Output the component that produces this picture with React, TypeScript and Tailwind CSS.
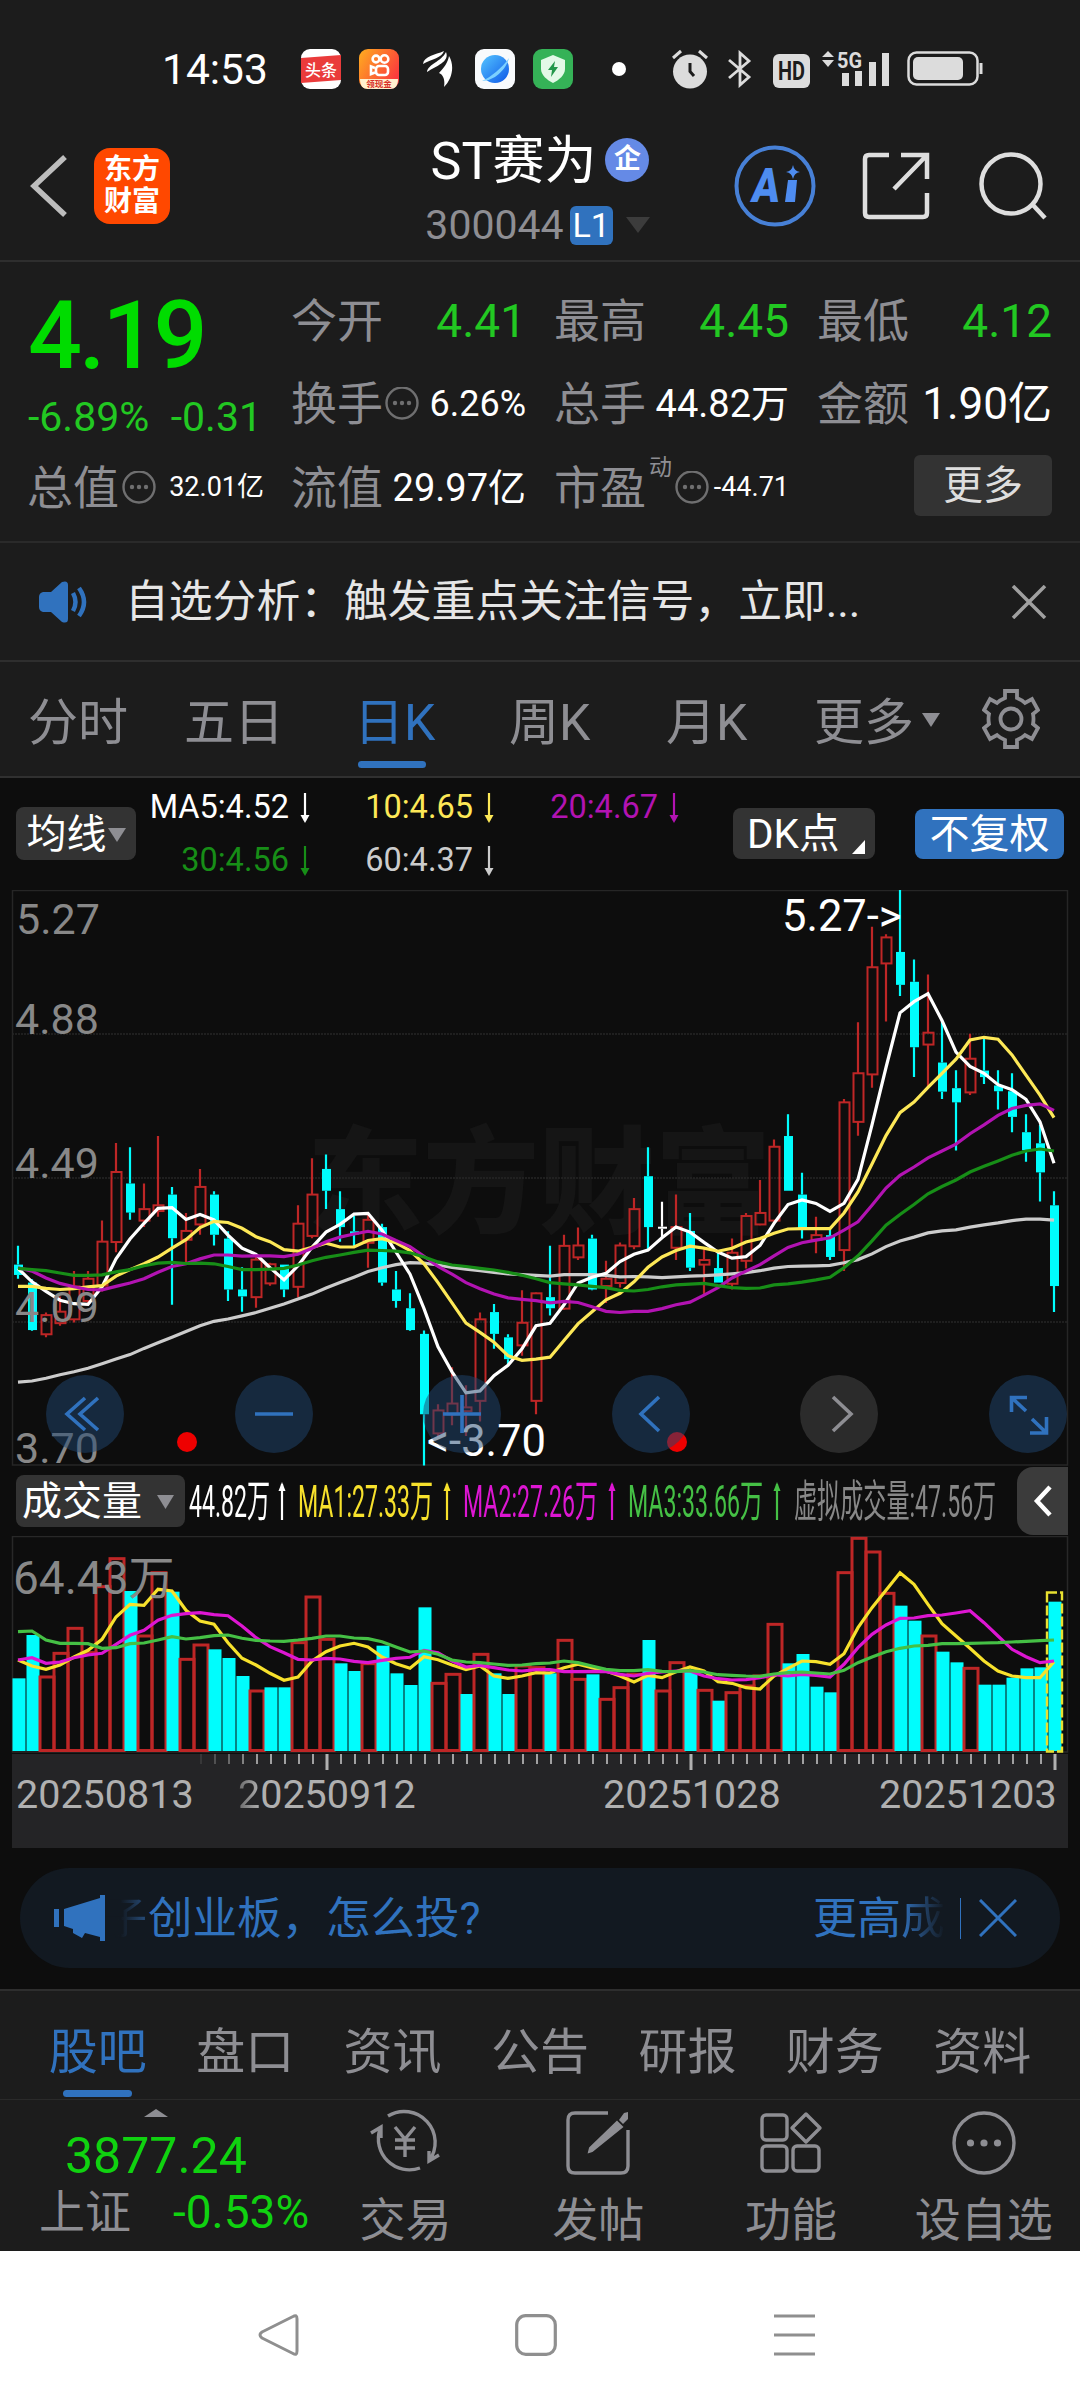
import React from "react";
import clsx from "clsx";

type Kind = "up" | "down" | "flat";
type Candle = [number, number, number, number, Kind];

const STEP = 14;
const FIRST_X = 18;
const COLORS: Record<Kind, string> = { up: "#be2626", down: "#00fdfd", flat: "#ffffff" };

// high, body top, body bottom, low
const candles: Candle[] = [
  [956, 1005, 1032, 1042, "down"], [1043, 1052, 1176, 1178, "down"], [1130, 1137, 1187, 1195, "up"],
  [1088, 1128, 1158, 1165, "up"], [1022, 1062, 1148, 1156, "up"], [1022, 1042, 1100, 1110, "up"],
  [890, 945, 1060, 1075, "up"], [687, 763, 946, 973, "up"], [698, 793, 869, 888, "down"],
  [793, 860, 890, 907, "up"], [669, 850, 865, 880, "up"], [802, 822, 936, 1110, "down"],
  [870, 917, 940, 1000, "up"], [755, 802, 900, 927, "up"], [813, 822, 927, 955, "down"],
  [918, 937, 1070, 1100, "down"], [1012, 1070, 1088, 1128, "down"], [985, 992, 1090, 1118, "up"],
  [1000, 1004, 1054, 1060, "up"], [1005, 1005, 1070, 1090, "down"], [850, 898, 1063, 1090, "up"],
  [727, 822, 930, 936, "up"], [717, 755, 812, 860, "down"], [813, 860, 907, 945, "down"],
  [878, 918, 926, 958, "down"], [875, 888, 948, 1013, "up"], [898, 907, 1052, 1060, "down"],
  [1022, 1070, 1100, 1118, "down"], [1080, 1119, 1176, 1178, "down"], [1177, 1186, 1396, 1530, "down"],
  [1370, 1386, 1446, 1460, "up"], [1273, 1368, 1396, 1425, "up"], [1320, 1378, 1388, 1453, "up"],
  [1130, 1148, 1361, 1415, "up"], [1108, 1129, 1186, 1225, "down"], [1187, 1195, 1252, 1265, "down"],
  [1072, 1157, 1216, 1243, "up"], [1078, 1080, 1361, 1396, "up"], [956, 1090, 1119, 1138, "down"],
  [927, 956, 1120, 1123, "up"], [908, 955, 986, 993, "up"], [927, 937, 1070, 1072, "down"],
  [995, 1042, 1061, 1105, "up"], [947, 955, 1053, 1065, "up"], [831, 860, 957, 965, "up"],
  [698, 774, 907, 965, "down"], [841, 906, 911, 937, "flat"], [822, 907, 961, 993, "up"],
  [870, 917, 1013, 1022, "down"], [965, 993, 1005, 1085, "up"], [975, 1014, 1052, 1052, "down"],
  [937, 974, 1055, 1070, "up"], [870, 878, 995, 1015, "up"], [784, 870, 900, 902, "up"],
  [678, 697, 890, 893, "up"], [612, 669, 812, 812, "down"], [765, 822, 912, 937, "down"],
  [880, 928, 940, 975, "up"], [912, 928, 985, 993, "down"], [572, 581, 967, 1022, "up"],
  [372, 505, 632, 668, "up"], [122, 228, 508, 543, "up"], [142, 150, 218, 370, "up"],
  [26, 188, 274, 303, "down"], [208, 266, 437, 515, "down"], [247, 399, 430, 540, "up"],
  [370, 477, 553, 572, "down"], [497, 544, 581, 707, "down"], [402, 467, 555, 562, "up"],
  [415, 498, 515, 533, "down"], [497, 537, 552, 600, "down"], [505, 552, 619, 659, "down"],
  [612, 659, 706, 736, "down"], [640, 688, 764, 840, "down"], [813, 850, 1061, 1129, "down"],
];

const priceLines = [
  {
    color: "#cccccc",
    values: [1312, 1309, 1302, 1293, 1285, 1276, 1264, 1252, 1240, 1224, 1209, 1195, 1180, 1165, 1153, 1147, 1139, 1130, 1119, 1108, 1095, 1082, 1066, 1052, 1038, 1023, 1013, 1005, 1000, 1001, 1006, 1012, 1017, 1021, 1025, 1029, 1031, 1033, 1035, 1031, 1031, 1031, 1033, 1037, 1036, 1037, 1039, 1037, 1035, 1034, 1032, 1029, 1026, 1021, 1014, 1010, 1009, 1008, 1007, 1000, 992, 977, 958, 943, 933, 922, 917, 914, 907, 901, 896, 890, 886, 886, 889],
  },
  {
    color: "#ffffff",
    values: [1015, 1050, 1075, 1098, 1107, 1109, 1063, 990, 938, 897, 858, 856, 887, 874, 888, 928, 962, 978, 1013, 1045, 1008, 960, 920, 900, 873, 871, 915, 972, 1030, 1120, 1220, 1285, 1340, 1335, 1295, 1268, 1225, 1165, 1158, 1110, 1053, 1038, 1028, 997, 978, 967, 935, 907, 920, 947, 972, 988, 984, 955, 897, 848, 836, 845, 866, 845, 782, 640, 490, 347, 318, 297, 367, 450, 487, 505, 535, 548, 573, 632, 740],
  },
  {
    color: "#fde857",
    values: [1062, 1062, 1067, 1070, 1068, 1063, 1060, 1035, 1018, 1003, 985, 962, 940, 908, 892, 895, 910, 932, 945, 966, 970, 960, 949, 959, 959, 942, 937, 948, 968, 1003, 1052, 1105, 1158, 1182, 1208, 1243, 1255, 1252, 1247, 1203, 1160, 1128, 1097, 1080, 1050, 1012, 985, 968, 957, 962, 970, 962, 946, 937, 923, 912, 911, 911, 911, 870, 815, 742, 668, 608, 580, 542, 505, 468, 418, 411, 416, 457, 510, 562, 621],
  },
  {
    color: "#b213b2",
    values: [1013, 1022, 1040, 1054, 1063, 1070, 1071, 1062, 1053, 1042, 1025, 1010, 1003, 990, 980, 980, 983, 982, 982, 984, 978, 962, 945, 933, 925, 918, 925, 942, 958, 983, 1010, 1030, 1052, 1068, 1082, 1092, 1096, 1099, 1105, 1101, 1104, 1115, 1127, 1130, 1127, 1127, 1120, 1110, 1103, 1085, 1065, 1040, 1022, 1005, 982, 960, 948, 941, 935, 915, 893, 850, 805, 772, 750, 726, 708, 690, 663, 640, 615, 597, 589, 585, 602],
  },
  {
    color: "#178e17",
    values: [1015, 1018, 1021, 1027, 1033, 1033, 1032, 1024, 1018, 1008, 1001, 999, 1002, 1001, 1003, 1010, 1018, 1018, 1017, 1015, 1006, 995, 986, 980, 973, 967, 968, 970, 974, 985, 998, 1006, 1010, 1015, 1019, 1025, 1033, 1042, 1052, 1055, 1058, 1062, 1065, 1072, 1074, 1070, 1063, 1058, 1056, 1054, 1060, 1065, 1067, 1066, 1058, 1055, 1051, 1045, 1038, 1013, 982, 943, 902, 874, 848, 820, 801, 784, 763, 748, 734, 719, 708, 703, 708],
  },
];

const volumeTops = [
  655, 525, 648, 577, 502, 575, 377, 293, 393, 525, 335, 395, 595, 552, 568, 594, 648, 690, 682, 682, 545, 408, 535, 610, 633,
  608, 557, 640, 675, 442, 667, 640, 702, 580, 640, 702, 615, 620, 640, 538, 655, 643, 715, 680, 640, 540, 690, 605, 633, 688,
  722, 695, 675, 645, 490, 610, 582, 680, 697, 335, 232, 273, 397, 437, 482, 525, 575, 607, 622, 674, 674, 653, 625, 622, 425,
];

// days whose volume bar is filled
const volumeDown = [
  0, 1, 8, 11, 14, 15, 16, 18, 19, 23, 24, 26, 27, 28, 29, 32, 34, 35, 38, 41, 45, 48, 50, 55, 56, 57, 58, 63, 64, 66, 67, 69, 70,
  71, 72, 73, 74,
];

const volumeLines = [
  {
    color: "#f7e12c",
    values: [597, 615, 625, 612, 588, 568, 535, 468, 430, 433, 385, 390, 448, 480, 490, 545, 592, 612, 637, 658, 648, 600, 572, 555, 547, 558, 588, 608, 622, 587, 596, 612, 626, 615, 645, 652, 645, 635, 636, 620, 610, 620, 630, 645, 663, 643, 650, 632, 618, 630, 662, 667, 680, 684, 645, 622, 600, 602, 610, 578, 500, 440, 388, 335, 370, 430, 488, 525, 562, 600, 630, 645, 650, 650, 602],
  },
  {
    color: "#dd16d2",
    values: [597, 590, 607, 603, 590, 582, 577, 550, 523, 508, 478, 463, 458, 455, 461, 464, 495, 530, 557, 575, 595, 597, 592, 594, 601, 605, 598, 592, 589, 568, 575, 600, 618, 613, 620, 627, 630, 626, 626, 632, 632, 631, 632, 640, 645, 637, 633, 630, 630, 645, 653, 657, 656, 650, 641, 645, 640, 643, 648, 610, 560, 520, 492, 472, 471, 464, 462, 456, 449, 485, 525, 565, 587, 605, 600],
  },
  {
    color: "#45c045",
    values: [512, 510, 537, 547, 547, 548, 562, 560, 548, 546, 537, 527, 534, 530, 524, 522, 532, 538, 540, 541, 537, 532, 525, 525, 531, 533, 542, 558, 573, 570, 580, 597, 603, 605, 609, 613, 612, 608, 606, 600, 605, 615, 625, 629, 629, 626, 631, 632, 629, 633, 641, 643, 645, 646, 639, 635, 633, 636, 639, 628, 605, 588, 572, 562, 555, 553, 548, 548, 547, 546, 545, 543, 541, 539, 537],
  },
];

const xAt = (i: number) => FIRST_X + i * STEP;
const priceY = (v: number) => v / 2.613;
const volumeY = (v: number) => (v - 228) / 3 + 1;

function toPoints(values: number[], scale: (v: number) => number) {
  return values.map((v, i) => `${xAt(i)},${scale(v).toFixed(1)}`).join(" ");
}

function Triangle({ className, up }: { className: string; up?: boolean }) {
  return (
    <svg viewBox="0 0 18 14" preserveAspectRatio="none" className={className} fill="currentColor">
      <path d={up ? "M0 14L9 0L18 14Z" : "M0 0H18L9 14Z"} />
    </svg>
  );
}

function Dots({ className }: { className?: string }) {
  return (
    <svg viewBox="0 0 34 34" className={clsx("w-[34px] h-[34px] shrink-0 text-[#6f6f70]", className)} fill="none" stroke="currentColor" strokeWidth="2.4">
      <circle cx="17" cy="16" r="15.5" />
      <g fill="currentColor" stroke="none">
        <circle cx="10" cy="16" r="2.2" />
        <circle cx="17" cy="16" r="2.2" />
        <circle cx="24" cy="16" r="2.2" />
      </g>
    </svg>
  );
}

function StatusBar() {
  return (
    <div className="h-[126px] pt-3 pl-[162px] flex items-center text-white">
      <span className="w-[139px] pt-0.5 text-[42.500px] leading-none">14:53</span>
      <svg viewBox="0 0 40 40" className="w-10 h-10 mr-[18px]">
        <rect width="40" height="40" rx="9" fill="#fff" />
        <path d="M0 9L40 6V31L0 34Z" fill="#ea3b3b" />
        <text x="20" y="26.5" textAnchor="middle" fontSize="16" fontWeight="500" fill="#fff">头条</text>
      </svg>
      <svg viewBox="0 0 40 40" className="w-10 h-10 mr-6">
        <defs>
          <linearGradient id="ks" x1="0" y1="0" x2="1" y2="0.6">
            <stop offset="0" stopColor="#ffae1f" />
            <stop offset="1" stopColor="#fb3a3d" />
          </linearGradient>
        </defs>
        <rect width="40" height="40" rx="9" fill="url(#ks)" />
        <g fill="none" stroke="#fff" strokeWidth="2.6">
          <circle cx="17" cy="10" r="3.4" />
          <circle cx="25.5" cy="10" r="3.8" />
          <rect x="17" y="17" width="12" height="9" rx="3" />
          <path d="M16 19L12 17.500V25L16 23.500" />
        </g>
        <path d="M1 30H39C39 37 36 40 31 40H9C4 40 1 37 1 30Z" fill="#fff0cf" />
        <text x="20" y="38" textAnchor="middle" fontSize="8.500" fontWeight="700" fill="#d8322b">领现金</text>
      </svg>
      <svg viewBox="0 0 30 36" className="w-[30px] h-9 mr-[22px]" fill="#fff">
        <path d="M0 13C1 5 12 4 21 0C19 7 9 8 0 13Z" />
        <path d="M4 21C5 13 18 11 23 1C27 11 13 15 4 21Z" />
        <path d="M16 22C21 17 25 11 26 5C32 15 29 28 21 36C22 30 21 24 16 22Z" />
      </svg>
      <svg viewBox="0 0 40 40" className="w-10 h-10 mr-[18px]">
        <defs>
          <linearGradient id="globe" x1="0" y1="0" x2="1" y2="1">
            <stop offset="0" stopColor="#55c5ff" />
            <stop offset="1" stopColor="#0d57e8" />
          </linearGradient>
        </defs>
        <rect width="40" height="40" rx="9" fill="#f8fafc" />
        <circle cx="20" cy="20" r="14" fill="url(#globe)" />
        <path d="M7 32C16 28 27 19 34 9C31 21 19 32 7 32Z" fill="#7cd0ff" />
      </svg>
      <svg viewBox="0 0 40 40" className="w-10 h-10 mr-[39px]">
        <rect width="40" height="40" rx="9" fill="#35b257" />
        <path d="M20 6L32 11V20C32 26 26 31 20 34C14 31 8 26 8 20V11Z" fill="#e3f9e7" />
        <path d="M22 12L15 21H19L18 28L25 18H21Z" fill="#23974a" />
      </svg>
      <span className="w-3.5 h-3.5 rounded-full bg-white mr-[46px]" />
      <svg viewBox="0 0 36 40" className="w-9 h-10 mr-5" fill="#dcdcdc">
        <circle cx="18" cy="22.500" r="17" />
        <path d="M18 14V22.500L22 27" fill="none" stroke="#1c1c1c" strokeWidth="3" />
        <path d="M1 9L9 2M35 9L27 2" stroke="#dcdcdc" strokeWidth="3" />
      </svg>
      <svg viewBox="0 0 24 38" className="w-6 h-[38px] mr-[21px]" fill="none" stroke="#dcdcdc" strokeWidth="2.800">
        <path d="M1 10L21 27L12 35V3L21 11L1 28" />
      </svg>
      <svg viewBox="0 0 37 34" className="w-[37px] h-[34px] mr-3 mt-1">
        <rect width="37" height="34" rx="6" fill="#dcdcdc" />
        <text x="5" y="26" textLength="27" lengthAdjust="spacingAndGlyphs" fontSize="25" fontWeight="700" fill="#1c1c1c">HD</text>
      </svg>
      <svg viewBox="0 0 68 38" className="w-[68px] h-[38px] mr-[17px]" fill="#dcdcdc">
        <path d="M0 7L6 1L12 7ZM0 10H12L6 17Z" />
        <text x="15" y="17.500" textLength="25" lengthAdjust="spacingAndGlyphs" fontSize="22" fontWeight="700">5G</text>
        <rect x="20" y="23" width="7" height="13" />
        <rect x="33" y="21" width="7" height="15" />
        <rect x="47" y="12" width="7" height="24" />
        <rect x="60" y="3" width="7" height="33" />
      </svg>
      <svg viewBox="0 0 76 36" className="w-[76px] h-9">
        <rect x="1.500" y="1.500" width="69" height="32" rx="8" fill="none" stroke="#dcdcdc" strokeWidth="2.500" />
        <rect x="6" y="6" width="50" height="23" rx="5" fill="#dcdcdc" />
        <path d="M74 12V23" stroke="#dcdcdc" strokeWidth="3" />
      </svg>
    </div>
  );
}

function Header() {
  return (
    <div className="h-[136px] flex border-b-2 border-[#2e2e2e]">
      <div className="w-[400px] pl-[30px] pb-[15px] flex items-center gap-[27px]">
        <svg viewBox="0 0 37 62" className="w-[37px] h-[62px]" fill="none" stroke="#bdbdbd" strokeWidth="5.500">
          <path d="M35 2L4 31L35 60" />
        </svg>
        <div className="w-[76px] h-[76px] rounded-2xl bg-[#ff4800] text-white font-bold text-[28px] leading-[32px] flex flex-col items-center justify-center">
          <span>东方</span>
          <span>财富</span>
        </div>
      </div>
      <div className="w-[280px] flex flex-col items-center">
        <div className="h-[69px] flex items-center gap-[9px]">
          <span className="pt-0.5 text-[52px] leading-none text-white whitespace-nowrap">ST赛为</span>
          <span className="w-11 h-11 -mt-0.5 rounded-full bg-[#658ae6] text-white text-[27px] font-bold leading-none flex items-center justify-center">企</span>
        </div>
        <div className="h-16 -mt-0.5 mr-[5px] flex items-center">
          <span className="text-[41px] leading-none text-[#8e8e93]">300044</span>
          <span className="ml-[6px] w-[43px] h-[39px] rounded-md bg-[#3072be] text-white text-[34px] leading-none flex items-center justify-center">L1</span>
          <Triangle className="ml-[13px] w-6 h-4 text-[#3c3c3c]" />
        </div>
      </div>
      <div className="flex-1 pl-[54px] pb-[15px] flex items-center">
        <svg viewBox="0 0 82 82" className="w-[82px] h-[82px] mr-[46px]">
          <circle cx="41" cy="41" r="38.500" fill="none" stroke="#4780d6" strokeWidth="4" />
          <text x="24" y="57" fontSize="48" fontWeight="900" fill="#4e8cf0" transform="skewX(-8)" textLength="28" lengthAdjust="spacingAndGlyphs">A</text>
          <path d="M54 35H63L61 57H51Z" fill="#4e8cf0" />
          <path d="M59 20Q60 26 66 27Q60 28 59 34Q58 28 52 27Q58 26 59 20Z" fill="#4e8cf0" />
        </svg>
        <svg viewBox="0 0 68 68" className="w-[68px] h-[68px] mr-[49px]" fill="none" stroke="#dedede" strokeWidth="4.500">
          <path d="M27 3H7Q3 3 3 7V61Q3 65 7 65H61Q65 65 65 61V41M39 3H65V27M65 3L32 37" />
        </svg>
        <svg viewBox="0 0 68 68" className="w-[68px] h-[68px]" fill="none" stroke="#dedede" strokeWidth="4.500">
          <circle cx="32" cy="32" r="29.500" />
          <path d="M53 52L66 66" />
        </svg>
      </div>
    </div>
  );
}

function Quote() {
  const label = "-ml-px text-[46px] text-[#8e8e93]";
  const cell = "w-[234px] h-[83.500px] flex items-center justify-between";
  return (
    <div className="h-[281px] pt-[17px] pl-[28px] flex leading-none whitespace-nowrap border-b-2 border-[#2a2a2a]">
      <div className="w-[264px]">
        <div className="h-[112px] flex items-center text-[95px] font-medium tracking-[-3px] text-[#00dc00]">4.19</div>
        <div className="h-[55px] pb-0.5 w-[234px] flex items-center justify-between text-[41px] text-[#22c822]">
          <span>-6.89%</span>
          <span>-0.31</span>
        </div>
        <div className="w-[236px] h-[83px] flex items-center">
          <span className={label}>总值</span>
          <Dots className="ml-[3px]" />
          <span className="ml-auto text-[27px] text-white">32.01亿</span>
        </div>
      </div>
      <div className="grid grid-cols-[234px_234px_234px] gap-x-[29px] content-start">
        <div className={cell}>
          <span className={label}>今开</span>
          <span className="text-[46px] text-[#22c822]">4.41</span>
        </div>
        <div className={cell}>
          <span className={label}>最高</span>
          <span className="text-[46px] text-[#22c822]">4.45</span>
        </div>
        <div className={cell}>
          <span className={label}>最低</span>
          <span className="text-[46px] text-[#22c822]">4.12</span>
        </div>
        <div className={cell}>
          <span className={label}>换手</span>
          <Dots className="-ml-2" />
          <span className="text-[36px] text-white">6.26%</span>
        </div>
        <div className={cell}>
          <span className={label}>总手</span>
          <span className="text-[38px] text-white">44.82万</span>
        </div>
        <div className={cell}>
          <span className={label}>金额</span>
          <span className="text-[44px] text-white">1.90亿</span>
        </div>
        <div className={cell}>
          <span className={label}>流值</span>
          <span className="text-[38px] text-white">29.97亿</span>
        </div>
        <div className={cell}>
          <span className={label}>市盈</span>
          <span className="-mt-[40px] -ml-0.5 text-[23px] text-[#8e8e93]">动</span>
          <Dots className="-ml-0.5" />
          <span className="text-[27px] text-white">-44.71</span>
        </div>
        <div className={clsx(cell, "pl-24 pb-1")}>
          <button className="w-[138px] h-[61px] rounded-md bg-[#333333] text-[40px] text-[#dedede]">更多</button>
        </div>
      </div>
    </div>
  );
}

function Notice() {
  return (
    <div className="h-[119px] pl-[38px] pr-[33px] flex items-center border-b-2 border-[#2e2e2e]">
      <svg viewBox="0 0 50 42" className="w-[50px] h-[42px] mr-[37px]" fill="#3072be">
        <path d="M5 11H13L24 1Q30 -1 30 4V38Q30 43 24 41L13 31H5Q1 30 1 26V16Q1 12 5 11Z" />
        <path d="M35 12Q40 21 35 30M41 7Q51 21 41 35" fill="none" stroke="#3072be" strokeWidth="4.500" />
      </svg>
      <span className="flex-1 pt-0.5 text-[43.800px] leading-none text-[#e6e6e6] whitespace-nowrap">自选分析：触发重点关注信号，立即...</span>
      <svg viewBox="0 0 36 34" className="w-9 h-[34px]" fill="none" stroke="#a0a0a0" strokeWidth="3.500">
        <path d="M2 1L34 33M34 1L2 33" />
      </svg>
    </div>
  );
}

function PeriodTabs() {
  const tab = "h-full pt-2 flex items-center";
  return (
    <div className="h-[116px] pl-7 flex text-[50px] leading-none text-[#8e8e93] border-b-2 border-[#303030] whitespace-nowrap">
      <div className={clsx(tab, "w-[156px]")}>分时</div>
      <div className={clsx(tab, "w-[170px]")}>五日</div>
      <div className={clsx(tab, "relative w-[155px] text-[#3072be]")}>
        日K
        <span className="absolute left-1 bottom-2 w-[68px] h-[7px] rounded-sm bg-[#3072be]" />
      </div>
      <div className={clsx(tab, "w-[157px]")}>周K</div>
      <div className={clsx(tab, "w-[148px]")}>月K</div>
      <div className={clsx(tab, "w-[168px]")}>
        更多
        <Triangle className="ml-2 mb-1.5 w-[18px] h-3.5" />
      </div>
      <div className="h-full flex items-center">
        <svg viewBox="0 0 58 60" className="w-[58px] h-[60px]" fill="none" stroke="#8e8e93" strokeWidth="3.800">
          <path d="M23 2H35V9Q40 11 43 14L50 10L56 21L51 25Q52 30 51 35L56 39L50 50L43 46Q40 49 35 51V58H23V51Q18 49 15 46L8 50L2 39L7 35Q6 30 7 25L2 21L8 10L15 14Q18 11 23 9Z" />
          <circle cx="29" cy="30" r="10.500" />
        </svg>
      </div>
    </div>
  );
}

function DownArrow() {
  return (
    <svg viewBox="0 0 10 30" className="w-2.5 h-[30px] shrink-0">
      <path d="M5 0V28" stroke="currentColor" strokeWidth="2.200" />
      <path d="M0.500 22H9.500L5 30Z" fill="currentColor" />
    </svg>
  );
}

function UpArrow({ className }: { className?: string }) {
  return (
    <svg viewBox="0 0 8 38" className={clsx("w-2 h-[38px] ml-0.5 mr-0.5 shrink-0", className)}>
      <path d="M4 2V38" stroke="currentColor" strokeWidth="2.200" />
      <path d="M0.500 9H7.500L4 0Z" fill="currentColor" />
    </svg>
  );
}

function MaItem({ text, className }: { text: string; className: string }) {
  return (
    <div className={clsx("flex items-center justify-end gap-[11px] h-[53px]", className)}>
      {text}
      <DownArrow />
    </div>
  );
}

function MaBar() {
  return (
    <div className="h-[112px] flex leading-none whitespace-nowrap text-white">
      <button className="ml-4 mt-[29px] w-[120px] h-[53px] rounded-lg bg-[#333333] text-[40px] flex items-center justify-center gap-px pt-0.5">
        均线
        <Triangle className="w-[18px] h-3.5 text-[#8e8e93]" />
      </button>
      <div className="w-[544px] pt-[3px] grid grid-cols-[174px_184px_185px] content-start text-[32.500px]">
        <MaItem text="MA5:4.52" className="text-white" />
        <MaItem text="10:4.65" className="text-[#fde857]" />
        <MaItem text="20:4.67" className="text-[#b213b2]" />
        <MaItem text="30:4.56" className="text-[#178e17]" />
        <MaItem text="60:4.37" className="text-[#cccccc]" />
      </div>
      <button className="ml-[53px] mt-[30px] w-[142px] h-[51px] rounded-lg bg-[#333333] text-[40.500px] pl-[14px] pt-0.5 flex items-center">
        DK点
        <svg viewBox="0 0 13 14" className="w-[13px] h-3.5 ml-3 mt-6" fill="#fff">
          <path d="M13 0V14H0Z" />
        </svg>
      </button>
      <button className="ml-10 mt-[31px] w-[149px] h-[50px] pt-0.5 rounded-lg bg-[#3072be] text-[40px]">不复权</button>
    </div>
  );
}

function PriceSvg() {
  return (
    <svg viewBox="0 10 1080 576" className="block w-[1080px] h-[576px]">
      <text x="307" y="344" fontSize="116" fontWeight="900" fill="#151515">东方财富</text>
      <g stroke="#262626" strokeWidth="1.500" fill="none">
        <rect x="12.500" y="10.500" width="1055" height="574.500" />
        <path d="M12 154H1067M12 298H1067M12 442H1067" strokeDasharray="2 1" />
      </g>
      {candles.map(([high, top, bottom, low, kind], i) => {
        const x = xAt(i);
        const color = COLORS[kind];
        const y1 = priceY(top);
        const y2 = priceY(bottom);
        return (
          <g key={i} stroke={color} strokeWidth="2.200">
            <path d={`M${x} ${priceY(high)}V${y1}M${x} ${y2}V${priceY(low)}`} />
            {kind === "up" ? (
              <rect x={x - 4.5} y={y1} width="10" height={y2 - y1} fill="none" strokeWidth="2" />
            ) : (
              <rect x={x - 4} y={y1} width="9" height={Math.max(y2 - y1, 2)} fill={color} stroke="none" />
            )}
          </g>
        );
      })}
      {priceLines.map((line) => (
        <polyline key={line.color} points={toPoints(line.values, priceY)} fill="none" stroke={line.color} strokeWidth="3.200" />
      ))}
      <g fontSize="43" fill="#888888">
        <text x="16" y="53.500">5.27</text>
        <text x="15" y="154">4.88</text>
        <text x="15" y="298">4.49</text>
        <text x="15" y="442">4.09</text>
        <text x="15" y="582.500">3.70</text>
      </g>
      <g fontSize="43.500" fill="#fff">
        <text x="782" y="50.500">5.27-&gt;</text>
        <text x="427" y="575.500">&lt;-3.70</text>
      </g>
      <circle cx="187" cy="562" r="10" fill="#ee0000" />
      <circle cx="677" cy="562" r="10" fill="#ee0000" />
    </svg>
  );
}

const controls = [
  { name: "fast-back", gap: "ml-[46px]", path: "M39 23L21 39L39 55M52 23L34 39L52 55" },
  { name: "zoom-out", gap: "ml-[111px]", path: "M20 39H58" },
  { name: "zoom-in", gap: "ml-[110px]", path: "M20 39H58M39 20V58" },
  { name: "back", gap: "ml-[111px]", path: "M47 22L29 39L47 56" },
  { name: "forward", gap: "ml-[110px]", path: "M33 22L51 39L33 56", muted: true },
  { name: "expand", gap: "ml-[111px]", path: "M38 22.500H22.500V37M22.500 22.500L37 36M41 58H57.500V42M57.500 58L43 44" },
];

function PriceChart() {
  return (
    <div className="relative h-[576px]">
      <PriceSvg />
      <div className="absolute left-0 bottom-[13px] flex">
        {controls.map((c) => (
          <button
            key={c.name}
            aria-label={c.name}
            className={clsx("w-[78px] h-[78px] rounded-full", c.gap, c.muted ? "bg-[#3c3c3c]/65 text-[#8e8e93]" : "bg-[#1f456f]/50 text-[#3072be]")}
          >
            <svg viewBox="0 0 78 78" className="w-[78px] h-[78px]" fill="none" stroke="currentColor" strokeWidth="3.600">
              <path d={c.path} />
            </svg>
          </button>
        ))}
      </div>
    </div>
  );
}

// Condensed legend value, squeezed horizontally to fit one line
function Squeezed({ text, className }: { text: string; className: string }) {
  return (
    <div className={clsx("h-full flex items-center pt-0.5", className)}>
      <span className="inline-block origin-left scale-x-[0.525] text-[44px]">{text}</span>
    </div>
  );
}

function VolumeBar() {
  return (
    <div className="h-[70px] flex leading-none whitespace-nowrap overflow-hidden text-white">
      <button className="ml-4 mt-[9px] w-[169px] h-[52px] rounded-lg bg-[#333333] text-[40px] pl-1.5 pt-0.5 flex items-center">
        成交量
        <Triangle className="ml-[15px] w-[17px] h-3.5 text-[#8e8e93]" />
      </button>
      <div className="w-[832px] pl-1 flex items-center h-[70px]">
        <Squeezed text="44.82万" className="w-[87px]" />
        <UpArrow />
        <Squeezed text="MA1:27.33万" className="ml-[10px] w-[143px] text-[#f7e12c]" />
        <UpArrow className="text-[#f7e12c]" />
        <Squeezed text="MA2:27.26万" className="ml-[10px] w-[143px] text-[#dd16d2]" />
        <UpArrow className="text-[#dd16d2]" />
        <Squeezed text="MA3:33.66万" className="ml-[10px] w-[143px] text-[#45c045]" />
        <UpArrow className="text-[#45c045]" />
        <Squeezed text="虚拟成交量:47.56万" className="ml-[11px] w-[220px] text-[#888888]" />
      </div>
      <button className="mt-px w-[51px] h-[68px] rounded-l-2xl bg-[#3b3b3b] flex items-center justify-center">
        <svg viewBox="0 0 20 32" className="w-5 h-8" fill="none" stroke="#fff" strokeWidth="4.500">
          <path d="M17 2L4 16L17 30" />
        </svg>
      </button>
    </div>
  );
}

function VolumeChart() {
  const base = volumeY(870);
  return (
    <svg viewBox="0 0 1080 218" className="block w-[1080px] h-[218px]">
      <path d="M12.500 216V0.500H1067.500V216Z" fill="none" stroke="#282828" strokeWidth="1.500" />
      {volumeTops.map((top, i) => {
        const x = 12.5 + i * STEP;
        const y = volumeY(top);
        return volumeDown.includes(i) ? (
          <rect key={i} x={x} y={y - 1} width="13" height={base - y + 1} fill="#00fdfd" />
        ) : (
          <rect key={i} x={x - 0.5} y={y} width="14" height={base - y - 0.5} fill="none" stroke="#be2626" strokeWidth="3" />
        );
      })}
      <rect x="1047" y="56.500" width="15" height="159" fill="none" stroke="#e8e030" strokeWidth="2.400" strokeDasharray="10 3" />
      {volumeLines.map((line) => (
        <polyline key={line.color} points={toPoints(line.values, volumeY)} fill="none" stroke={line.color} strokeWidth="3.200" />
      ))}
      <text x="13" y="57.500" fontSize="46" fill="#888888">64.43万</text>
    </svg>
  );
}

const ticks = Array.from({ length: 62 }, (_, k) => k + 13);

function TimeAxis() {
  return (
    <div className="mx-3 h-[94px] bg-[#242426] text-[#b0b0b0] leading-none text-[39.500px]">
      <svg viewBox="12 0 1056 17" className="block w-[1056px] h-[17px]" stroke="#b0b0b0">
        {ticks.map((i) => {
          const major = i === 22 || i === 48 || i === 74;
          return (
            <path
              key={i}
              d={`M${xAt(i) + 1} 0V${major ? 16 : 10}`}
              strokeWidth={major ? 3 : 1.8}
              opacity={Math.min(1, 0.15 + (i - 13) * 0.2)}
            />
          );
        })}
      </svg>
      <div className="flex pl-1 pt-1">
        <span className="w-[222px]">20250813</span>
        <span className="w-[365px]">
          <span className="text-transparent bg-clip-text bg-gradient-to-r from-[#6a6a6b] to-[#b0b0b0]">2</span>0250912
        </span>
        <span className="w-[276px]">20251028</span>
        <span>20251203</span>
      </div>
    </div>
  );
}

function Banner() {
  return (
    <div className="h-[140px] pt-5 px-5">
      <div className="h-[100px] rounded-full bg-[#121921] pl-[33px] pr-[43px] flex items-center text-[#3072be] text-[44px] leading-none whitespace-nowrap">
        <svg viewBox="0 0 53 46" className="w-[53px] h-[46px]" fill="currentColor">
          <path d="M1 14H6V32H1ZM11 14L47 3V0H52V46H47V42L32 38L29 43L20 38V34L11 31Z" />
        </svg>
        {/* marquee text fades out at both ends */}
        <span className="-ml-[3px] pt-0.5 text-transparent bg-clip-text bg-gradient-to-r from-[#121921] from-40% to-[#264f80]">子</span>
        <span className="flex-1 pl-px pt-0.5 text-[44.500px]">创业板，怎么投?</span>
        <span className="pt-0.5">更高</span>
        <span className="pt-0.5 text-transparent bg-clip-text bg-gradient-to-r from-[#3072be] to-[#121921]">成</span>
        <span className="ml-[15px] mr-[18px] w-px h-[41px] bg-[#3072be]" />
        <svg viewBox="0 0 38 38" className="w-[38px] h-[38px]" fill="none" stroke="currentColor" strokeWidth="3">
          <path d="M1 1L37 37M37 1L1 37" />
        </svg>
      </div>
    </div>
  );
}

const sections = ["股吧", "盘口", "资讯", "公告", "研报", "财务", "资料"];

function SectionTabs() {
  return (
    <div className="h-[111px] px-6 flex border-t-2 border-[#2e2e2e] border-b border-b-[#2a2a2a] text-[49px] leading-none">
      {sections.map((name, i) => (
        <div key={name} className={clsx("relative flex-1 flex items-center justify-center pt-[15px]", i === 0 ? "text-[#3072be]" : "text-[#8e8e93]")}>
          {name}
          {i === 0 && <span className="absolute bottom-0.5 left-[39px] w-[69px] h-[7px] rounded-sm bg-[#3072be]" />}
        </div>
      ))}
    </div>
  );
}

const actions = [
  {
    name: "交易",
    icon: (
      <>
        <path d="M20 9A31 31 0 0 1 61 54M52 61A31 31 0 0 1 12 22M3 26L13 20V31M71 48L61 54V44" />
        <path d="M27 20L37 32L47 20M37 32V50M27 33H47M27 41H47" />
      </>
    ),
  },
  {
    name: "发帖",
    icon: (
      <>
        <path d="M47 6H14Q7 6 7 13V59Q7 66 14 66H60Q67 66 67 59V23" />
        <path d="M56 15L61 20L31 44L28 45L29 41Z" fill="currentColor" strokeWidth="2" />
        <path d="M58 13L63 6L67 5V12L62 17Z" fill="currentColor" stroke="none" />
      </>
    ),
  },
  {
    name: "功能",
    icon: (
      <>
        <rect x="8" y="8" width="25" height="25" rx="4" />
        <rect x="8" y="39" width="25" height="25" rx="4" />
        <rect x="39" y="39" width="26" height="25" rx="4" />
        <path d="M52 7L66 21L52 35L38 21Z" strokeLinejoin="round" />
      </>
    ),
  },
  {
    name: "设自选",
    icon: (
      <>
        <circle cx="37" cy="36" r="30" />
        <g fill="currentColor" stroke="none">
          <circle cx="23.500" cy="36" r="3.600" />
          <circle cx="37" cy="36" r="3.600" />
          <circle cx="50.500" cy="36" r="3.600" />
        </g>
      </>
    ),
  },
];

function BottomBar() {
  return (
    <div className="h-[151px] flex leading-none whitespace-nowrap text-[46px] text-[#8e8e93]">
      <div className="w-[309px] pt-[9px]">
        <Triangle up className="ml-36 w-6 h-2" />
        <div className="pl-[65px] mt-[14px] text-[50px] text-[#10d210]">3877.24</div>
        <div className="pl-[39px] mt-2 flex items-center">
          上证
          <span className="ml-[42px] text-[#10d210]">-0.53%</span>
        </div>
      </div>
      {actions.map((a) => (
        <button key={a.name} className="flex-1 pt-[7px] flex flex-col items-center">
          <svg viewBox="0 0 74 72" className="w-[74px] h-[72px]" fill="none" stroke="currentColor" strokeWidth="3.400">
            {a.icon}
          </svg>
          <span className="mt-[18px]">{a.name}</span>
        </button>
      ))}
    </div>
  );
}

function SystemNav() {
  return (
    <div className="h-[149px] pt-[63px] pl-[258px] flex items-start bg-white">
      <svg viewBox="0 0 42 42" className="w-[42px] h-[42px] mr-[215px]" fill="none" stroke="#8f8f8f" strokeWidth="3" strokeLinejoin="round">
        <path d="M35 2.500Q39 0 39 5V37Q39 42 35 39.500L4 24Q0 21 4 18Z" />
      </svg>
      <svg viewBox="0 0 42 42" className="w-[42px] h-[42px] mr-[216px]" fill="none" stroke="#8f8f8f" strokeWidth="3.200">
        <rect x="1.700" y="1.700" width="38.600" height="38.600" rx="9" />
      </svg>
      <svg viewBox="0 0 42 42" className="w-[42px] h-[42px]" stroke="#8f8f8f" strokeWidth="3.200">
        <path d="M1 2H42M1 21H42M1 40H42" />
      </svg>
    </div>
  );
}

export default function App() {
  return (
    <div className="w-[1080px] h-[2400px] overflow-hidden bg-[#1c1c1c] font-['Roboto','Noto_Sans_CJK_SC',sans-serif]">
      <StatusBar />
      <Header />
      <Quote />
      <Notice />
      <PeriodTabs />
      <div className="h-[1211px] bg-[#0d0d0d]">
        <MaBar />
        <PriceChart />
        <VolumeBar />
        <VolumeChart />
        <TimeAxis />
        <Banner />
      </div>
      <SectionTabs />
      <BottomBar />
      <SystemNav />
    </div>
  );
}
